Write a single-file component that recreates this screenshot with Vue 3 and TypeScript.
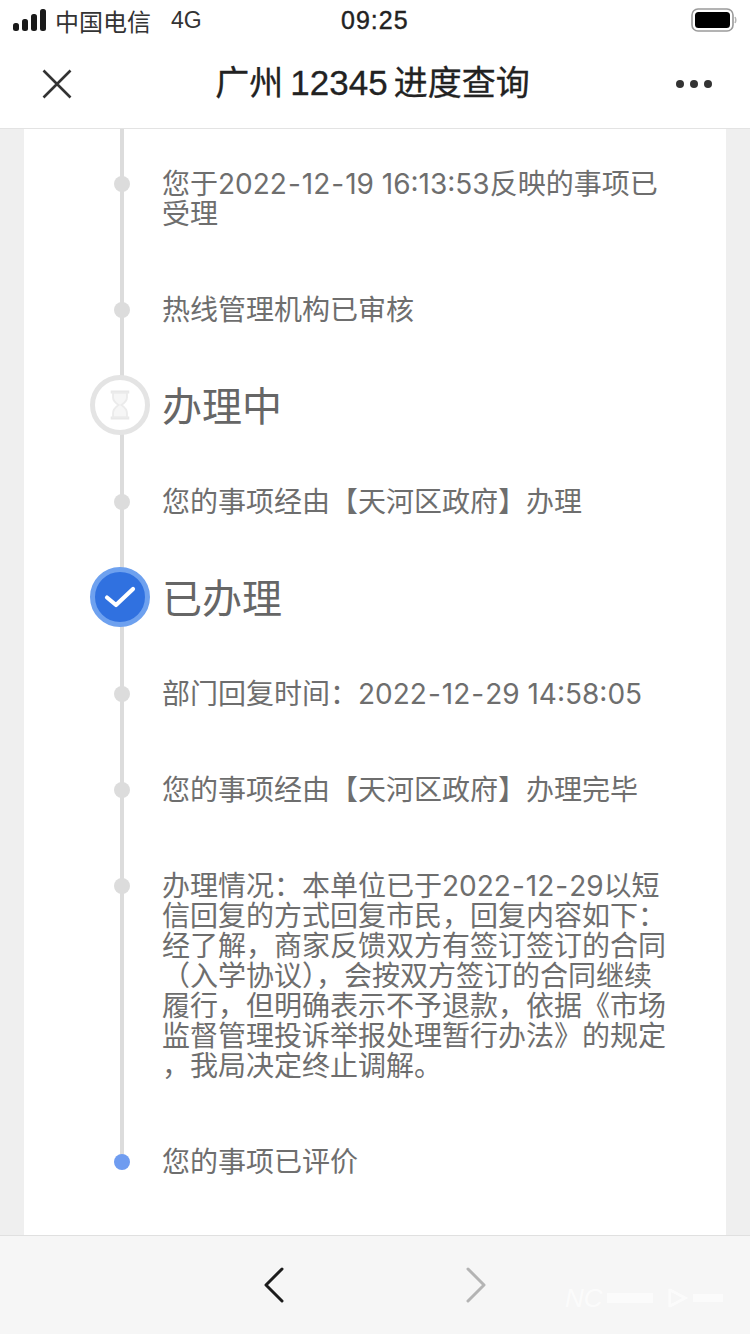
<script setup lang="ts">
type Row = { kind: 'dot' | 'wait' | 'done' | 'last'; lines: string[] }
const rows: Row[] = [
  { kind: 'dot', lines: ['您于2022-12-19 16:13:53反映的事项已', '受理'] },
  { kind: 'dot', lines: ['热线管理机构已审核'] },
  { kind: 'wait', lines: ['办理中'] },
  { kind: 'dot', lines: ['您的事项经由【天河区政府】办理'] },
  { kind: 'done', lines: ['已办理'] },
  { kind: 'dot', lines: ['部门回复时间：2022-12-29 14:58:05'] },
  { kind: 'dot', lines: ['您的事项经由【天河区政府】办理完毕'] },
  {
    kind: 'dot',
    lines: [
      '办理情况：本单位已于2022-12-29以短',
      '信回复的方式回复市民，回复内容如下：',
      '经了解，商家反馈双方有签订签订的合同',
      '（入学协议），会按双方签订的合同继续',
      '履行，但明确表示不予退款，依据《市场',
      '监督管理投诉举报处理暂行办法》的规定',
      '，我局决定终止调解。',
    ],
  },
  { kind: 'last', lines: ['您的事项已评价'] },
]
const parts = (line: string): string[] => line.split(/(-)/)
</script>

<template>
  <div class="page">
    <header class="top">
      <div class="status">
        <div class="status-left">
          <svg class="signal" width="34" height="22" viewBox="0 0 34 22">
            <rect x="0" y="14" width="6" height="8" rx="2.5" />
            <rect x="9" y="10" width="6" height="12" rx="2.5" />
            <rect x="18" y="5" width="6" height="17" rx="2.5" />
            <rect x="27" y="0" width="6" height="22" rx="2.5" />
          </svg>
          <span class="carrier">中国电信</span>
          <span class="net">4G</span>
        </div>
        <span class="time">09:25</span>
        <svg class="battery" width="46" height="24" viewBox="0 0 46 24">
          <rect x="1" y="1" width="41" height="22" rx="6" fill="none" stroke="#9a9a9a" stroke-width="1.6" />
          <rect x="4" y="4" width="35" height="16" rx="3.5" fill="#000" />
          <path d="M44 9 q1.6 3 0 6" fill="none" stroke="#b5b5b5" stroke-width="1.5" />
        </svg>
      </div>
      <nav class="nav">
        <svg class="close" width="30" height="30" viewBox="0 0 30 30">
          <path d="M1.5 1.5 L28.5 28.5 M28.5 1.5 L1.5 28.5" fill="none" stroke="#333" stroke-width="2.6" />
        </svg>
        <h1 class="title">广州<span class="num">12345</span>进度查询</h1>
        <div class="more"><i></i><i></i><i></i></div>
      </nav>
    </header>

    <main class="body">
      <section class="card">
        <div class="timeline">
          <div v-for="(row, i) in rows" :key="i" class="row" :class="'row-' + row.kind">
            <div class="marker">
              <span v-if="row.kind === 'dot'" class="dot"></span>
              <span v-else-if="row.kind === 'last'" class="dot dot-last"></span>
              <span v-else-if="row.kind === 'wait'" class="badge badge-wait">
                <svg width="26" height="32" viewBox="0 0 28 32">
                  <path d="M4 2 H24 M4 30 H24" stroke="#e8e8e8" stroke-width="3" fill="none" />
                  <path d="M6.5 3 H21.5 V8 Q21.5 12 15.5 16 Q21.5 20 21.5 25 V29 H6.5 V25 Q6.5 20 12.5 16 Q6.5 12 6.5 8 Z" fill="#f6f6f6" stroke="#ebebeb" stroke-width="2" />
                </svg>
              </span>
              <span v-else class="badge badge-done">
                <svg width="32" height="24" viewBox="0 0 32 24">
                  <path d="M3 12.5 L12 20 L29 4" fill="none" stroke="#fff" stroke-width="4.2" stroke-linecap="round" stroke-linejoin="round" />
                </svg>
              </span>
            </div>
            <div class="text" :class="{ heading: row.kind === 'wait' || row.kind === 'done' }">
              <div v-for="(line, j) in row.lines" :key="j" class="line"><template v-for="(part, k) in parts(line)" :key="k"><span v-if="part === '-'" class="dash">-</span><template v-else>{{ part }}</template></template></div>
            </div>
          </div>
        </div>
      </section>
    </main>

    <footer class="foot">
      <svg width="22" height="36" viewBox="0 0 22 36">
        <path d="M19 2 L3 18 L19 34" fill="none" stroke="#1c1c1c" stroke-width="3" stroke-linecap="round" stroke-linejoin="round" />
      </svg>
      <svg width="22" height="36" viewBox="0 0 22 36">
        <path d="M3 2 L19 18 L3 34" fill="none" stroke="#b4b4b4" stroke-width="3" stroke-linecap="round" stroke-linejoin="round" />
      </svg>
      <div class="mark">
        <span class="mark-nc">NC</span>
        <span class="mark-bar"></span>
        <svg width="22" height="24" viewBox="0 0 24 24">
          <path d="M3 2 V22 M3 3 L20 12 L3 21" fill="none" stroke="#fff" stroke-width="3" />
        </svg>
        <span class="mark-bar mark-bar-s"></span>
      </div>
    </footer>
  </div>
</template>

<style>
html, body { margin: 0; padding: 0; background: #fff; }
</style>

<style scoped>
.page {
  width: 750px;
  height: 1334px;
  display: flex;
  flex-direction: column;
  overflow: hidden;
  font-family: "Liberation Sans", "Noto Sans CJK SC", sans-serif;
  background: #fff;
}
.top {
  height: 128px;
  flex: none;
  background: #fff;
  border-bottom: 1px solid #e3e3e3;
}
.status {
  height: 40px;
  padding: 0 13px 0 13px;
  display: flex;
  align-items: center;
  justify-content: space-between;
  position: relative;
}
.status-left { display: flex; align-items: center; }
.signal { fill: #1a1a1a; margin-right: 8px; }
.carrier { font-size: 24px; color: #333; }
.net { font-size: 23px; color: #333; margin-left: 20px; }
.time {
  position: absolute;
  left: 341px;
  font-size: 25px;
  letter-spacing: 1px;
  color: #222;
  -webkit-text-stroke: 0.4px #222;
}
.nav {
  height: 88px;
  display: flex;
  align-items: center;
  justify-content: space-between;
  padding: 0 38px 0 42px;
  box-sizing: border-box;
}
.close { flex: none; }
.title {
  margin: 0 0 8px -3px;
  font-size: 34px;
  font-weight: 400;
  color: #222;
  white-space: nowrap;
  -webkit-text-stroke: 0.3px #222;
}
.num { margin: 0 6px 0 7px; font-size: 35px; }
.more { display: flex; gap: 6px; }
.more i { width: 8px; height: 8px; border-radius: 50%; background: #333; display: block; }
.body {
  flex: 1;
  min-height: 0;
  background: #efefef;
  padding: 0 24px;
  overflow: hidden;
}
.card {
  height: 100%;
  background: #fff;
}
.timeline {
  position: relative;
  display: flex;
  flex-direction: column;
  gap: 66px;
  padding-top: 40px;
}
.timeline::before {
  content: "";
  position: absolute;
  left: 96px;
  top: 0;
  width: 4px;
  height: 1030px;
  background: #dcdcdc;
}
.row {
  position: relative;
  display: flex;
}
.marker {
  width: 139px;
  height: 30px;
  flex: none;
  position: relative;
}
.dot {
  position: absolute;
  left: 90px;
  top: 7px;
  width: 16px;
  height: 16px;
  border-radius: 50%;
  background: #dcdcdc;
}
.dot-last { background: #6f9cf0; }
.badge {
  position: absolute;
  left: 66px;
  top: -16px;
  width: 60px;
  height: 60px;
  box-sizing: border-box;
  border-radius: 50%;
  display: flex;
  align-items: center;
  justify-content: center;
}
.badge-wait { background: #fff; border: 5px solid #e4e4e4; }
.badge-done { background: #3071e0; border: 5px solid #6ea1ef; }
.text {
  margin-left: -1px;
  font-family: Inter, "Noto Sans CJK SC", sans-serif;
  font-size: 28px;
  line-height: 30px;
  color: #6e6e6e;
}
.line { white-space: nowrap; height: 30px; }
.dash { margin: 0 1px; }
.heading { font-size: 40px; color: #666; }
.heading .line { line-height: 32px; }
.foot {
  position: relative;
  flex: none;
  height: 99px;
  box-sizing: border-box;
  background: #f6f6f6;
  border-top: 1px solid #e0e0e0;
  display: flex;
  align-items: center;
  justify-content: center;
  gap: 180px;
}
.mark {
  position: absolute;
  left: 565px;
  top: 50px;
  display: flex;
  align-items: center;
  gap: 4px;
  opacity: 0.65;
}
.mark-nc {
  font-size: 26px;
  line-height: 24px;
  font-style: italic;
  color: #fff;
}
.mark-bar { width: 46px; height: 10px; background: #fff; margin-right: 10px; }
.mark-bar-s { width: 30px; height: 8px; margin-right: 0; }
</style>
